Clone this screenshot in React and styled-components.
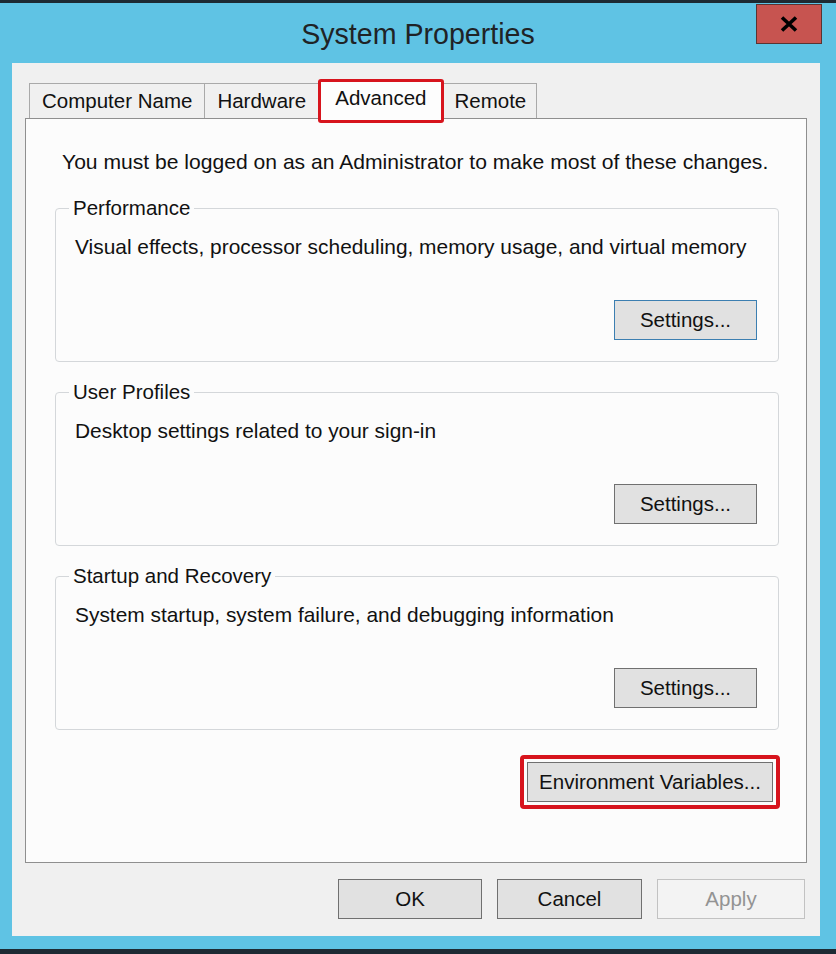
import styled, { createGlobalStyle } from 'styled-components'

const Global = createGlobalStyle`
  body {
    margin: 0;
    font-family: "Liberation Sans", Arial, sans-serif;
    background: #5fc3e4;
  }
`

const Window = styled.div`
  width: 836px;
  height: 954px;
  box-sizing: border-box;
  background: #5fc3e4;
  border-top: 3px solid #1d2a33;
  border-bottom: 5px solid #1d2a33;
  display: flex;
  flex-direction: column;
`

const TitleBar = styled.div`
  height: 60px;
  display: grid;
  grid-template-columns: 1fr auto 1fr;
  align-items: center;
`

const Title = styled.div`
  grid-column: 2;
  font-size: 28.6px;
  color: #1f2326;
  padding-top: 2px;
`

const CloseButton = styled.div`
  grid-column: 3;
  justify-self: end;
  align-self: start;
  margin-top: 1px;
  margin-right: 14px;
  width: 66px;
  height: 40px;
  box-sizing: border-box;
  background: #c75450;
  border: 1px solid #5a3432;
  display: flex;
  align-items: center;
  justify-content: center;
`

const Client = styled.div`
  margin: 0 16px 0 12px;
  height: 873px;
  box-sizing: border-box;
  background: #f0f0f0;
  padding: 16px 13px 0;
  display: flex;
  flex-direction: column;
`

const TabStrip = styled.div`
  display: flex;
  align-items: flex-end;
  padding-left: 4px;
`

const Tab = styled.div`
  height: ${p => (p.$active ? '44px' : '35px')};
  box-sizing: border-box;
  display: flex;
  align-items: center;
  padding: ${p => (p.$active ? '0 15px 6px 14px' : `0 ${p.$pad}px`)};
  font-size: 20.5px;
  color: #111;
  background: ${p => (p.$active ? '#fdfdfd' : '#f0f0f0')};
  border: ${p => (p.$active ? '3px solid #d7141d' : '1px solid #a9a9a9')};
  border-bottom: ${p => (p.$active ? '3px solid #d7141d' : '0')};
  border-radius: ${p => (p.$active ? '3px' : '0')};
  margin-right: -1px;
  margin-bottom: ${p => (p.$active ? '-5px' : '0')};
  position: relative;
  z-index: ${p => (p.$active ? 1 : 0)};
`

const Panel = styled.div`
  height: 745px;
  box-sizing: border-box;
  border: 1px solid #8f8f8f;
  background: #fcfcfc;
  padding: 31px 27px 0 29px;
  display: flex;
  flex-direction: column;
`

const Intro = styled.p`
  margin: 0 0 22px 7px;
  font-size: 21.1px;
  line-height: 24px;
  color: #111;
`

const Group = styled.fieldset`
  margin: 0 0 18px;
  padding: 15px 21px 21px 19px;
  border: 1px solid #d4d7da;
  border-radius: 4px;
  min-width: 0;
  display: flex;
  flex-direction: column;
`

const Legend = styled.legend`
  padding: 0 4px;
  margin-left: -6px;
  font-size: 20.5px;
  line-height: 24px;
  color: #111;
`

const GroupText = styled.p`
  margin: 0;
  font-size: 20.9px;
  line-height: 24px;
  color: #111;
`

const Button = styled.button`
  width: ${p => p.$w}px;
  height: 40px;
  box-sizing: border-box;
  padding: 0;
  font-family: "Liberation Sans", Arial, sans-serif;
  font-size: 20.5px;
  color: ${p => (p.disabled ? '#939393' : '#111')};
  background: ${p => (p.disabled ? '#f3f3f3' : '#e1e1e1')};
  border: 1px solid ${p => (p.disabled ? '#c2c2c2' : p.$focus ? '#3c7fb1' : '#707070')};
  border-radius: 0;
`

const GroupButton = styled(Button)`
  align-self: flex-end;
  margin-top: 41px;
`

const Highlight = styled.div`
  align-self: flex-end;
  margin: 7px -1px 0 0;
  border: 4px solid #d7141d;
  border-radius: 4px;
  padding: 3px;
  display: flex;
`

const ButtonRow = styled.div`
  display: flex;
  justify-content: flex-end;
  gap: 15px;
  margin-top: 16px;
  padding-right: 2px;
`

const groups = [
  {
    title: 'Performance',
    text: 'Visual effects, processor scheduling, memory usage, and virtual memory',
    focus: true,
  },
  { title: 'User Profiles', text: 'Desktop settings related to your sign-in' },
  {
    title: 'Startup and Recovery',
    text: 'System startup, system failure, and debugging information',
  },
]

const tabs = [
  { name: 'Computer Name', pad: 12 },
  { name: 'Hardware', pad: 12 },
  { name: 'Advanced' },
  { name: 'Remote', pad: 10 },
]

export default function App() {
  return (
    <>
      <Global />
      <Window>
        <TitleBar>
          <Title>System Properties</Title>
          <CloseButton>
            <svg width="18" height="16" viewBox="0 0 18 16">
              <path d="M2 1.5 L16 14.5 M16 1.5 L2 14.5" stroke="#000" strokeWidth="3.6" />
            </svg>
          </CloseButton>
        </TitleBar>
        <Client>
          <TabStrip>
            {tabs.map(t => (
              <Tab key={t.name} $active={t.name === 'Advanced'} $pad={t.pad}>{t.name}</Tab>
            ))}
          </TabStrip>
          <Panel>
            <Intro>You must be logged on as an Administrator to make most of these changes.</Intro>
            {groups.map(g => (
              <Group key={g.title}>
                <Legend>{g.title}</Legend>
                <GroupText>{g.text}</GroupText>
                <GroupButton $w={143} $focus={g.focus}>Settings...</GroupButton>
              </Group>
            ))}
            <Highlight>
              <Button $w={246}>Environment Variables...</Button>
            </Highlight>
          </Panel>
          <ButtonRow>
            <Button $w={144}>OK</Button>
            <Button $w={145}>Cancel</Button>
            <Button $w={148} disabled>Apply</Button>
          </ButtonRow>
        </Client>
      </Window>
    </>
  )
}
